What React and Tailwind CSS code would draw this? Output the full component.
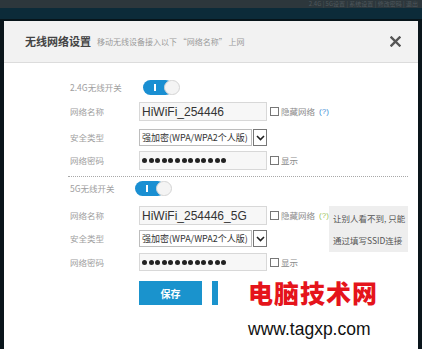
import React from "react";

const cjk = { fontFamily: '"Noto Sans CJK SC", "Liberation Sans", sans-serif' };
const latin = { fontFamily: '"Liberation Sans", "Noto Sans CJK SC", sans-serif' };

function Toggle({ className = "" }) {
  return (
    <div className={"relative h-[15px] w-[37px] " + className}>
      <div className="absolute left-0 top-0 h-[15px] w-[30px] rounded-full bg-[#1a8fd2]" />
      <div className="absolute left-[11px] top-[4px] h-[7px] w-[2px] bg-white" />
      <div className="absolute right-0 top-0 h-[15px] w-[16px] rounded-full border border-[#d4d4d4] bg-[#f4f4f4]" />
    </div>
  );
}

function Label({ children }) {
  return (
    <div className="w-[69px] shrink-0 text-[8.5px] leading-none text-[#a0a0a0]" style={cjk}>
      {children}
    </div>
  );
}

function Check({ text, help, helpColor }) {
  return (
    <div className="ml-[3px] flex items-center">
      <div className="h-[9px] w-[9px] border border-[#777] bg-white" />
      <span className="ml-[2px] text-[8.5px] leading-none text-[#8a8a8a]" style={cjk}>
        {text}
      </span>
      {help && (
        <span className={"ml-[4px] text-[8px] leading-none " + helpColor} style={latin}>
          (?)
        </span>
      )}
    </div>
  );
}

function TextInput({ value, h = "h-[19px]" }) {
  return (
    <div
      className={"flex w-[128px] items-center border border-[#d8d8d8] bg-[#f7f7f7] pl-[2px] text-[12px] text-[#333] " + h}
      style={latin}
    >
      {value}
    </div>
  );
}

function Dots({ h = "h-[19px]" }) {
  return (
    <div className={"flex w-[128px] items-center gap-[1.6px] border border-[#d8d8d8] bg-[#f7f7f7] pl-[2px] " + h}>
      {Array.from({ length: 13 }).map((_, i) => (
        <div key={i} className="h-[5px] w-[5px] rounded-full bg-[#222]" />
      ))}
    </div>
  );
}

function Select() {
  return (
    <div className="flex h-[17px] w-[128px] items-stretch">
      <div
        className="flex flex-1 items-center border border-[#bdbdbd] bg-white pl-[2px] text-[9px] leading-none text-[#333]"
        style={cjk}
      >
        强加密(WPA/WPA2个人版)
      </div>
      <div className="ml-[1px] flex w-[14px] items-center justify-center border border-[#777] bg-white">
        <svg width="9" height="6" viewBox="0 0 9 6">
          <path d="M1 1 L4.5 4.5 L8 1" fill="none" stroke="#222" strokeWidth="1.6" />
        </svg>
      </div>
    </div>
  );
}

export default function App() {
  return (
    <div className="relative h-[349px] w-[422px] overflow-hidden bg-[#0a151b]">
      <div className="flex h-[8px] items-center justify-end overflow-hidden bg-[#2d373c] pr-[4px]">
        <span className="text-[6px] leading-none text-[#4f585c]" style={cjk}>
          2.4G | 5G设置 | 系统设置 | 修改密码 | 退出
        </span>
      </div>
      <div className="h-[11px] bg-[#0c2b39]" />
      <div className="h-[2px] bg-[#07141a]" />
      <div className="relative mx-[4px] h-[328px] bg-white">
        <div className="flex h-[42px] items-center border-b border-[#dcdcdc] bg-[#f2f2f2] pl-[21px] pr-[17px]">
          <span className="text-[11px] font-bold leading-none text-[#444]" style={cjk}>
            无线网络设置
          </span>
          <span className="ml-[6px] text-[8px] leading-none text-[#9a9a9a]" style={cjk}>
            移动无线设备接入以下 “网络名称” 上网
          </span>
          <svg className="ml-auto" width="11" height="11" viewBox="0 0 11 11">
            <path d="M1.5 1.5 L9.5 9.5 M9.5 1.5 L1.5 9.5" stroke="#555" strokeWidth="2.4" strokeLinecap="square" />
          </svg>
        </div>

        <div className="pl-[66px]">
          <div className="mt-[17px] flex h-[15px] items-center">
            <Label>2.4G无线开关</Label>
            <Toggle className="ml-[4px]" />
          </div>
          <div className="mt-[7px] flex items-center">
            <Label>网络名称</Label>
            <TextInput value="HiWiFi_254446" />
            <Check text="隐藏网络" help helpColor="text-[#3b8ed6]" />
          </div>
          <div className="mt-[8px] flex items-center">
            <Label>安全类型</Label>
            <Select />
          </div>
          <div className="mt-[5px] flex items-center">
            <Label>网络密码</Label>
            <Dots />
            <Check text="显示" />
          </div>
          <div className="ml-[-2px] mt-[6px] w-[340px] border-t border-dotted border-[#a8a8a8]" />
          <div className="mt-[4px] flex h-[15px] items-center">
            <Label>5G无线开关</Label>
            <Toggle className="ml-[-4px]" />
          </div>
          <div className="mt-[10px] flex items-center">
            <Label>网络名称</Label>
            <TextInput value="HiWiFi_254446_5G" />
            <Check text="隐藏网络" help helpColor="text-[#9cc35c]" />
          </div>
          <div className="mt-[5px] flex items-center">
            <Label>安全类型</Label>
            <Select />
          </div>
          <div className="mt-[6px] flex items-center">
            <Label>网络密码</Label>
            <Dots h="h-[18px]" />
            <Check text="显示" />
          </div>
          <div className="mt-[10px] flex items-center pl-[69px]">
            <div
              className="flex h-[24px] w-[63px] items-center justify-center bg-[#1a93cd] text-[10px] font-bold text-white"
              style={cjk}
            >
              保存
            </div>
            <div className="ml-[10px] h-[24px] w-[63px] bg-[#1a93cd]" />
          </div>
        </div>

        <div
          className="absolute left-[325px] top-[185px] flex h-[46px] w-[79px] flex-col justify-center gap-[13px] bg-[#eeeeee] pl-[4px] text-[8.5px] leading-none text-[#555]"
          style={cjk}
        >
          <span>让别人看不到, 只能</span>
          <span>通过填写SSID连接</span>
        </div>

        <div className="absolute left-[214px] top-[251px] flex h-[80px] w-[194px] flex-col bg-white pl-[30px]">
          <span
            className="mt-[8px] text-[25px] font-black leading-none tracking-[1px] text-[#e5141b]"
            style={cjk}
          >
            电脑技术网
          </span>
          <span className="mt-[16px] text-[17.5px] leading-none text-[#111]" style={latin}>
            www.tagxp.com
          </span>
        </div>
      </div>
    </div>
  );
}
